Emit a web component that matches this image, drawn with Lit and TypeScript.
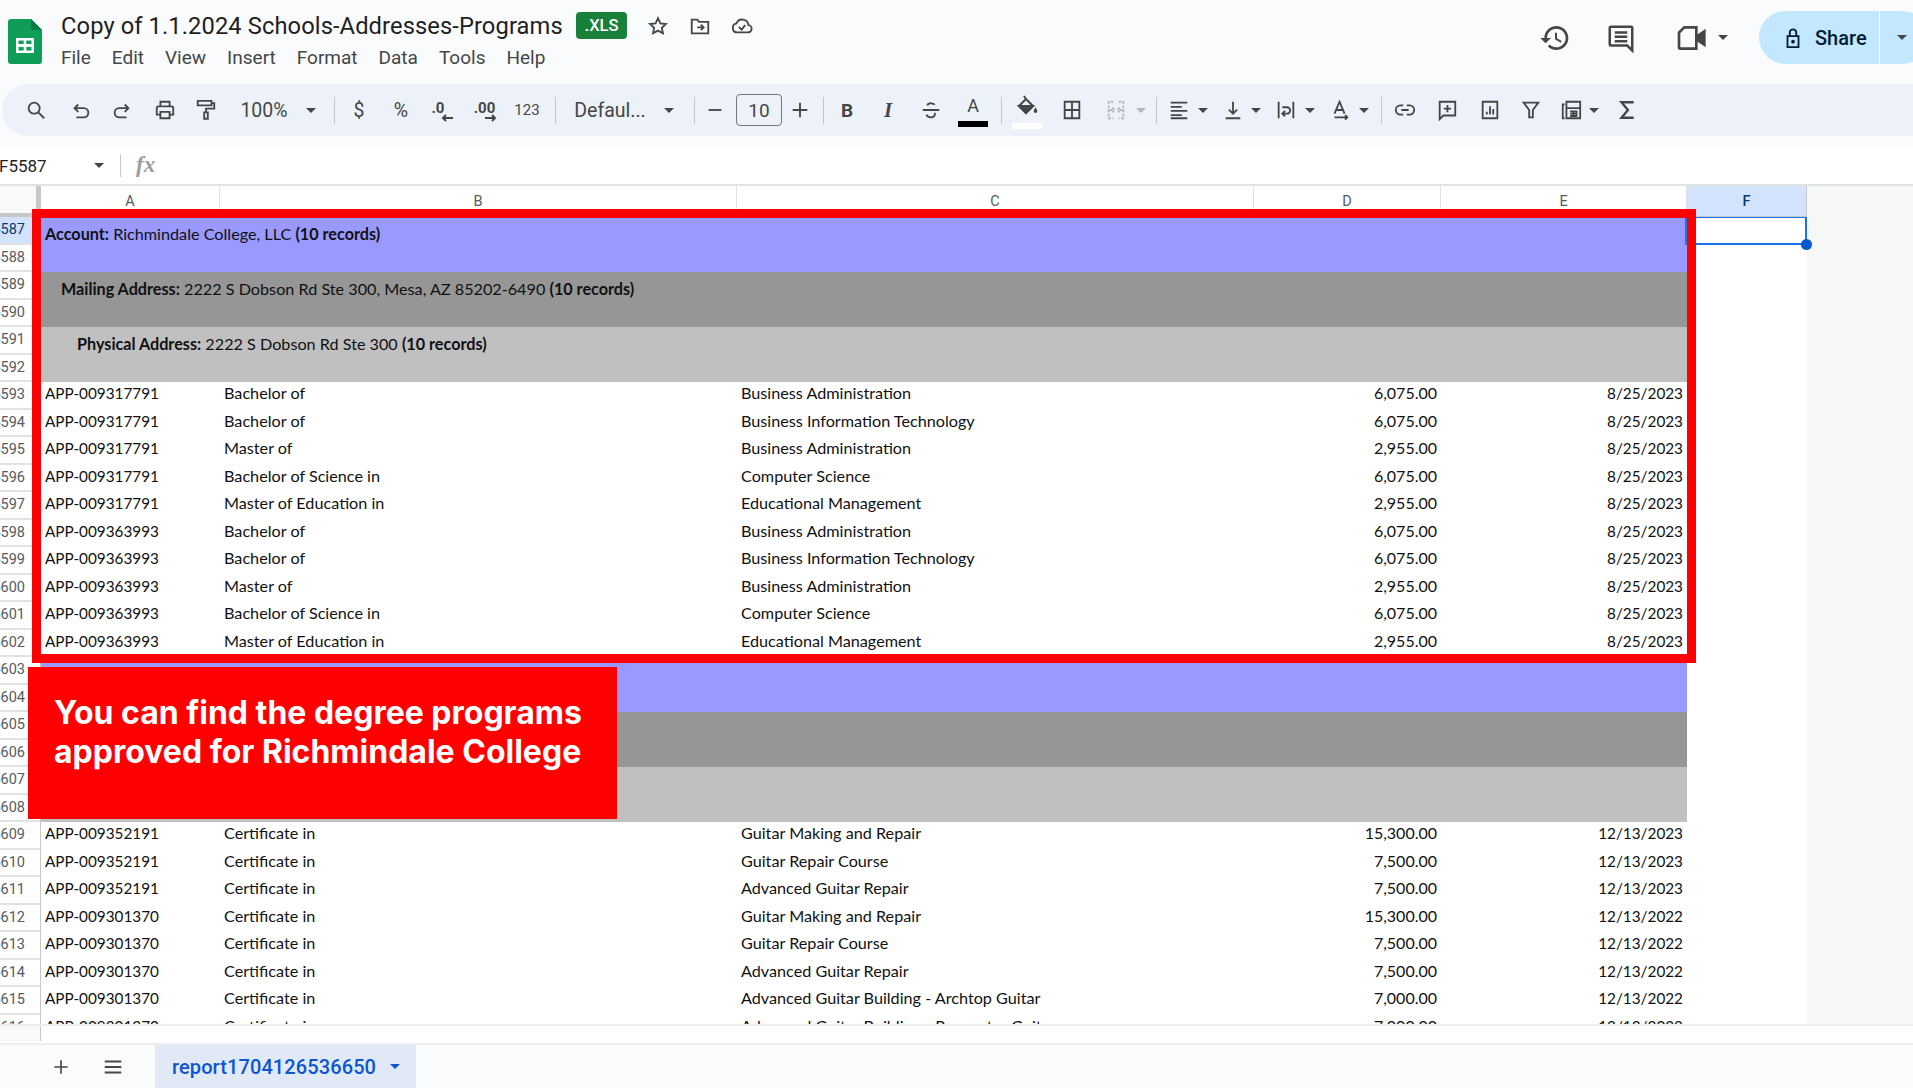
import { LitElement, html, css, svg } from 'lit';
import { customElement } from 'lit/decorators.js';

const icons: Record<string, unknown> = {
    search: svg`<circle cx="10" cy="10" r="6"/><path d="M14.5 14.5 21 21"/>`,
    undo: svg`<path d="M9 5 5 9l4 4M5 9h10a4.5 4.5 0 0 1 0 10H7" transform="translate(0 1)"/>`,
    redo: svg`<path d="M15 5l4 4-4 4M19 9H9a4.5 4.5 0 0 0 0 10h8" transform="translate(0 1)"/>`,
    print: svg`<path d="M7 8V3h10v5M7 17H3v-7a2 2 0 0 1 2-2h14a2 2 0 0 1 2 2v7h-4"/><path d="M7 14h10v7H7z"/>`,
    roller: svg`<path d="M3 2h15v5H3zM18 4.500h3v6h-9v4"/><path d="M10 14.500h4v7h-4z"/>`,
    strike: svg`<path d="M3 12h18M16 6.500C15 4.500 9 3.500 8 7M16 15c1 3-1 5-4 5s-4-1-5-3"/>`,
    fill: svg`<path d="M9 1l2 3 7 7-7 7-7-7 7-7"/><path fill="currentColor" d="M4 11h14l-7 7z"/><path fill="currentColor" stroke="none" d="M20.500 12.500c1 1.500 1.800 2.600 1.800 3.700a1.800 1.800 0 0 1-3.600 0c0-1.100.8-2.200 1.800-3.700z"/>`,
    borders: svg`<path d="M4 3h16v18H4zM12 3v18M4 12h16"/>`,
    merge: svg`<path d="M9 3H4v18h5M15 3h5v18h-5M5 12h5M8 9.500l2.500 2.500L8 14.500M19 12h-5M16 9.500 13.500 12l2.500 2.500" stroke-dasharray="3 1.500"/>`,
    align: svg`<path d="M3 4h18M3 8.500h12M3 13h18M3 17.500h12M3 21h18"/>`,
    valign: svg`<path d="M12 3v13M7.500 11.500 12 16l4.500-4.500M4 21h16"/>`,
    wrap: svg`<path d="M4 3v18M20 3v18M8 9h5a3 3 0 0 1 0 7h-4M11 13l-3 3 3 3"/>`,
    rotate: svg`<path d="M6 16 11.500 3 17 16M8 12h7M6 20h14M17.500 17.500 20 20l-2.500 2.500"/>`,
    link: svg`<path d="M10 7H7a5 5 0 0 0 0 10h3M14 7h3a5 5 0 0 1 0 10h-3M8 12h8"/>`,
    comment: svg`<path d="M4 22V3h17v15H8zM12.500 6.500v8M8.500 10.500h8"/>`,
    chart: svg`<path d="M4 3h16v18H4zM8.500 17v-3M12 17V8M15.500 17v-6"/>`,
    filter: svg`<path d="M4 4h16l-6 8v8h-4v-8z"/>`,
    calc: svg`<path d="M5 21H3V6h2M7 3h15v18H7zM7 10h15M11 13.500h7v5h-7M14.500 13.500v5M11 16h7"/>`,
    sigma: svg`<path stroke-width="2.600" d="M18 5V3.500H6l7 8.500-7 8.500h12V19"/>`,
    history: svg`<path fill="currentColor" stroke="none" d="M13 3c-4.970 0-9 4.030-9 9H1l3.890 3.890.07.14L9 12H6c0-3.870 3.130-7 7-7s7 3.130 7 7-3.130 7-7 7c-1.930 0-3.680-.79-4.940-2.060l-1.420 1.420C8.270 19.990 10.510 21 13 21c4.970 0 9-4.030 9-9s-4.030-9-9-9zm-1 5v5l4.280 2.540.72-1.210-3.500-2.080V8H12z"/>`,
    chat: svg`<path d="M21 22l-4-4H4a1 1 0 0 1-1-1V4a1 1 0 0 1 1-1h16a1 1 0 0 1 1 1zM7 7.500h10M7 11h10M7 14.500h10"/>`,
    video: svg`<path d="M7 4h9v16H4a1 1 0 0 1-1-1V8z"/><path fill="currentColor" d="M22 7l-6 4v2l6 4z"/>`,
    lock: svg`<path d="M6 10h12v12H6zM8.500 10V6a3.500 3.500 0 0 1 7 0v4"/><circle cx="12" cy="16" r="1" fill="currentColor"/>`,
    star: svg`<path d="M12 3.500l2.600 5.600 6.100.7-4.500 4.200 1.200 6-5.400-3-5.400 3 1.200-6-4.500-4.200 6.100-.7z"/>`,
    move: svg`<path d="M3 5h6l2 2.500h10V20H3zM9 13.500h7M13 10.500l3 3-3 3"/>`,
    cloud: svg`<path d="M7 19a5 5 0 0 1-1-9.900 6.800 6.800 0 0 1 13 1.900 4 4 0 0 1-1 8zM8.500 13l3 3 4-5"/>`,
    plus: svg`<path d="M12 4v16M4 12h16"/>`,
    lines: svg`<path d="M3 6h18M3 12h18M3 18h18"/>`,
    minus: svg`<path d="M5 12h14"/>`,
};

function icon(name: string, size = 22) {
    return html`<svg class="ic" width=${size} height=${size} viewBox="0 0 24 24">${icons[name]}</svg>`;
}

const caret = html`<i class="caret"></i>`;

// centre x of every toolbar item, as measured from the reference
const tools: [string, number, number, string?][] = [
    ['search', 36, 22],
    ['undo', 81, 22],
    ['redo', 122, 22],
    ['print', 165, 24],
    ['roller', 206, 24],
    ['t:100%', 264, 50],
    ['caret', 311, 10],
    ['sep', 334, 1],
    ['t:$', 359, 12],
    ['t:%', 401, 18],
    ['dec1', 443, 26],
    ['dec2', 486, 26],
    ['small:123', 527, 26],
    ['sep', 555, 1],
    ['t:Defaul...', 610, 72],
    ['caret', 669, 10],
    ['sep', 694, 1],
    ['minus', 715, 22],
    ['size', 759, 46],
    ['plus', 800, 22],
    ['sep', 823, 1],
    ['bold', 847, 16],
    ['italic', 888, 12],
    ['strike', 931, 22],
    ['color', 973, 30],
    ['sep', 1001, 1],
    ['bucket', 1027, 30],
    ['borders', 1072, 24],
    ['merge', 1116, 24, 'dim'],
    ['caretdim', 1141, 10],
    ['sep', 1156, 1],
    ['align', 1179, 24],
    ['caret', 1203, 10],
    ['valign', 1233, 24],
    ['caret', 1256, 10],
    ['wrap', 1286, 24],
    ['caret', 1310, 10],
    ['rotate', 1340, 24],
    ['caret', 1364, 10],
    ['sep', 1381, 1],
    ['link', 1405, 24],
    ['comment', 1447, 24],
    ['chart', 1490, 24],
    ['filter', 1531, 22],
    ['calc', 1571, 24],
    ['caret', 1594, 10],
    ['sigma', 1627, 22],
];

const programs: [string, string, string, string, string][] = [
    ['APP-009317791', 'Bachelor of', 'Business Administration', '6,075.00', '8/25/2023'],
    ['APP-009317791', 'Bachelor of', 'Business Information Technology', '6,075.00', '8/25/2023'],
    ['APP-009317791', 'Master of', 'Business Administration', '2,955.00', '8/25/2023'],
    ['APP-009317791', 'Bachelor of Science in', 'Computer Science', '6,075.00', '8/25/2023'],
    ['APP-009317791', 'Master of Education in', 'Educational Management', '2,955.00', '8/25/2023'],
    ['APP-009363993', 'Bachelor of', 'Business Administration', '6,075.00', '8/25/2023'],
    ['APP-009363993', 'Bachelor of', 'Business Information Technology', '6,075.00', '8/25/2023'],
    ['APP-009363993', 'Master of', 'Business Administration', '2,955.00', '8/25/2023'],
    ['APP-009363993', 'Bachelor of Science in', 'Computer Science', '6,075.00', '8/25/2023'],
    ['APP-009363993', 'Master of Education in', 'Educational Management', '2,955.00', '8/25/2023'],
];

const guitars: [string, string, string, string, string][] = [
    ['APP-009352191', 'Certificate in', 'Guitar Making and Repair', '15,300.00', '12/13/2023'],
    ['APP-009352191', 'Certificate in', 'Guitar Repair Course', '7,500.00', '12/13/2023'],
    ['APP-009352191', 'Certificate in', 'Advanced Guitar Repair', '7,500.00', '12/13/2023'],
    ['APP-009301370', 'Certificate in', 'Guitar Making and Repair', '15,300.00', '12/13/2022'],
    ['APP-009301370', 'Certificate in', 'Guitar Repair Course', '7,500.00', '12/13/2022'],
    ['APP-009301370', 'Certificate in', 'Advanced Guitar Repair', '7,500.00', '12/13/2022'],
    ['APP-009301370', 'Certificate in', 'Advanced Guitar Building - Archtop Guitar', '7,000.00', '12/13/2022'],
    ['APP-009301370', 'Certificate in', 'Advanced Guitar Building - Resonator Guitar', '7,000.00', '12/13/2022'],
];

const menus = ['File', 'Edit', 'View', 'Insert', 'Format', 'Data', 'Tools', 'Help'];
const rowNumbers = Array.from({ length: 30 }, (_, i) => 5587 + i);

@customElement('app-root')
export class AppRoot extends LitElement {
    static styles = css`
        * {
            box-sizing: border-box;
        }

        :host {
            display: flex;
            flex-direction: column;
            position: relative;
            width: 1913px;
            height: 1088px;
            overflow: hidden;
            background: #f9fbfd;
            font-family: Roboto, 'Liberation Sans', sans-serif;
            color: #1f1f1f;
        }

        .ic {
            display: block;
            fill: none;
            stroke: currentColor;
            stroke-width: 2;
            color: #444746;
            flex: none;
        }

        .caret {
            display: block;
            width: 0;
            height: 0;
            flex: none;
            border-left: 5px solid transparent;
            border-right: 5px solid transparent;
            border-top: 5px solid #444746;
        }

        /* title area */
        .top {
            height: 84px;
            flex: none;
            display: flex;
            padding: 12px 0 0 8px;
        }

        .logo {
            width: 34px;
            height: 45px;
            margin-top: 7px;
        }

        .names {
            margin-left: 19px;
            flex: 1;
        }

        .title-line {
            display: flex;
            align-items: center;
            height: 27px;
        }

        .title {
            font-size: 23.700px;
            width: 515px;
            white-space: nowrap;
            letter-spacing: 0.1px;
        }

        .badge {
            width: 51px;
            height: 27px;
            background: #188038;
            color: #fff;
            border-radius: 4px;
            font-size: 16.500px;
            font-weight: 500;
            display: flex;
            align-items: center;
            justify-content: center;
        }

        .title-icons {
            display: flex;
            gap: 20px;
            margin-left: 20px;
        }

        .menu {
            display: flex;
            gap: 21px;
            font-size: 19px;
            margin-top: 7px;
            color: #444746;
        }

        .right {
            display: flex;
            align-items: center;
            height: 53px;
            margin-top: -1px;
        }

        .right > .caret {
            margin-left: 11px;
        }

        .share {
            width: 170px;
            height: 53px;
            margin-left: 31px;
            margin-right: -16px;
            background: #c2e7ff;
            border-radius: 27px;
            display: flex;
            align-items: center;
            padding-left: 23px;
            font-size: 20px;
            font-weight: 500;
            color: #001d35;
        }

        .share span {
            margin-left: 11px;
            width: 64px;
        }

        .share .split {
            height: 53px;
            width: 1px;
            background: #f9fbfd;
            margin-right: 17px;
        }

        .share .ic {
            color: #001d35;
        }

        /* toolbar */
        .toolbar-wrap {
            height: 63px;
            flex: none;
            padding-left: 2px;
        }

        .toolbar {
            height: 52px;
            width: 1960px;
            background: #edf2fa;
            border-radius: 26px 0 0 26px;
            display: flex;
            align-items: center;
            color: #444746;
            white-space: nowrap;
        }

        .tool {
            flex: none;
            display: flex;
            align-items: center;
            justify-content: center;
            font-size: 19.500px;
            color: #444746;
        }

        .tool.small {
            font-size: 15px;
        }

        .tool.dim .ic {
            color: #b4b8bd;
        }

        .tool .caret.dim {
            border-top-color: #b4b8bd;
        }

        .sep {
            width: 1px;
            height: 27px;
            background: #c7c7c7;
        }

        .size {
            height: 32px;
            border: 1px solid #747775;
            border-radius: 4px;
            font-size: 19px;
        }

        .bold {
            font-weight: 700;
            font-size: 19px;
        }

        .italic {
            font-style: italic;
            font-family: 'Liberation Serif', serif;
            font-size: 21px;
            font-weight: 700;
        }

        .swatch {
            display: flex;
            flex-direction: column;
            align-items: center;
            height: 38px;
            width: 100%;
        }

        .swatch b {
            font-weight: 400;
            font-size: 18px;
            line-height: 26px;
            height: 30px;
            padding-top: 2px;
        }

        .swatch u {
            display: block;
            width: 100%;
            height: 6px;
        }

        .swatch .ic {
            margin-top: 4px;
            height: 24px;
        }

        .swatch .paper {
            background: #fff;
            margin-top: 4px;
        }

        .swatch .ink {
            background: #000;
        }

        .dec text {
            fill: #444746;
            stroke: none;
            font-family: Roboto, sans-serif;
            font-size: 15px;
            font-weight: 700;
        }

        /* formula bar */
        .formula {
            height: 37px;
            flex: none;
            background: #fff;
            display: flex;
            align-items: center;
            font-size: 17px;
        }

        .cell-name {
            width: 95px;
            margin-left: -1px;
        }

        .formula .split {
            width: 1px;
            height: 23px;
            background: #c7c7c7;
            margin: 0 15px 0 16px;
        }

        .fx {
            font-family: 'Liberation Serif', serif;
            font-style: italic;
            font-weight: 700;
            font-size: 23px;
            color: #9a9ea3;
            margin-top: -2px;
        }

        /* column headers */
        .sheet {
            height: 859px;
            flex: none;
            background: #fff;
            display: flex;
            flex-direction: column;
            overflow: hidden;
            border-top: 2px solid #e1e3e1;
        }

        .cols,
        .row {
            display: grid;
            grid-template-columns: 179px 517px 517px 187px 246px 120px;
        }

        .cols {
            height: 31px;
            flex: 1;
            font-size: 14.500px;
            color: #575a5e;
            background: #f6f8f6;
        }

        .cols div {
            display: flex;
            align-items: center;
            justify-content: center;
            background: #fff;
            border-right: 1px solid #e1e3e1;
        }

        .cols .on {
            background: #d3e3fd;
            color: #0b3a6e;
            font-weight: 500;
            border-right: 1px solid #c7c7c7;
            border-bottom: 1px solid #c7c7c7;
        }

        .head-wrap {
            display: flex;
            flex: none;
            height: 31px;
        }

        .corner {
            width: 41px;
            flex: none;
            background: #f8f9fa;
            border-right: 5px solid #c7c7c7;
            border-bottom: 4px solid #c7c7c7;
        }

        .grid-body {
            display: flex;
            height: 809px;
            flex: none;
            overflow: hidden;
            border-bottom: 2px solid #eceef0;
        }

        .gutter {
            width: 41px;
            flex: none;
            background: #fff;
            border-right: 1px solid #c7c7c7;
            overflow: hidden;
        }

        .num {
            height: 27.500px;
            border-bottom: 2px solid #e1e3e1;
            font-size: 14.500px;
            color: #575a5e;
            display: flex;
            align-items: center;
            justify-content: flex-end;
            padding-right: 15px;
        }

        .num.on {
            background: #d3e3fd;
            color: #0b3a6e;
        }

        /* white up to the end of column F, then the empty sheet colour */
        .cells {
            flex: 1;
            background: linear-gradient(to right, #fff 1766px, #f6f8f6 1766px);
            font-family: Lato, 'Liberation Sans', sans-serif;
            font-size: 16.200px;
            color: #111;
        }

        .band {
            height: 55px;
            width: 1646px;
            padding: 6.500px 4px;
            line-height: 20px;
            white-space: nowrap;
        }

        .band b {
            font-weight: 700;
        }

        .account {
            background: #9999ff;
        }

        .mailing {
            background: #969696;
            padding-left: 20px;
        }

        .physical {
            background: #c0c0c0;
            padding-left: 36px;
        }

        .row {
            height: 27.500px;
            align-items: center;
            line-height: 22px;
        }

        .row div {
            padding: 0 4px 5px;
            white-space: nowrap;
        }

        .row .id {
            font-size: 15.300px;
        }

        .row .fee {
            font-size: 16px;
            text-align: right;
        }

        .row .date {
            font-size: 15.300px;
            text-align: right;
        }

        .scrollbar {
            flex: 1;
            display: flex;
        }

        .scrollbar div {
            width: 41px;
            height: 15px;
            background: #f8f9fa;
            border-right: 1px solid #c7c7c7;
        }

        /* sheet tabs */
        .tabs {
            flex: 1;
            display: flex;
            align-items: center;
            border-top: 2px solid #eceef0;
            padding-left: 51px;
        }

        .tabs .ic {
            margin-right: 31px;
        }

        .tab {
            align-self: stretch;
            width: 261px;
            background: #e1e9f7;
            color: #0b57d0;
            font-size: 20px;
            font-weight: 500;
            display: flex;
            align-items: center;
            padding-left: 17px;
            gap: 14px;
            letter-spacing: 0.1px;
        }

        .tab .caret {
            border-top-color: #0b57d0;
        }

        /* things that lie over the sheet */
        .frame {
            position: absolute;
            left: 32px;
            top: 209px;
            width: 1664px;
            height: 454px;
            border: 9px solid #ff0000;
        }

        .callout {
            position: absolute;
            left: 28px;
            top: 667px;
            width: 589px;
            height: 152px;
            background: #ff0000;
            color: #fff;
            font-family: Inter, 'Liberation Sans', sans-serif;
            font-weight: 700;
            font-size: 32px;
            line-height: 38.500px;
            padding: 27px 0 0 26px;
            white-space: nowrap;
        }

        .selection {
            position: absolute;
            left: 1685px;
            top: 217px;
            width: 122px;
            height: 28px;
            border: 2px solid #1a73e8;
            border-top-width: 1px;
        }

        .handle {
            position: absolute;
            right: -7px;
            bottom: -7px;
            width: 11px;
            height: 11px;
            border-radius: 50%;
            background: #0b57d0;
        }
    `;

    private renderTools() {
        let right = 2;
        return tools.map(([kind, centre, width, extra]) => {
            const left = centre - width / 2;
            const gap = left - right;
            right = left + width;
            const style = `width:${width}px;margin-left:${gap}px`;
            let body: unknown = '';
            let cls = 'tool';
            if (kind === 'caret') body = caret;
            else if (kind === 'caretdim') body = html`<i class="caret dim"></i>`;
            else if (kind === 'sep') cls += ' sep';
            else if (kind.startsWith('t:')) body = kind.slice(2);
            else if (kind.startsWith('small:')) {
                body = kind.slice(6);
                cls += ' small';
            } else if (kind === 'size') {
                body = '10';
                cls += ' size';
            } else if (kind === 'bold') {
                body = 'B';
                cls += ' bold';
            } else if (kind === 'italic') {
                body = 'I';
                cls += ' italic';
            } else if (kind === 'color') {
                body = html`<div class="swatch"><b>A</b><u class="ink"></u></div>`;
            } else if (kind === 'bucket') {
                body = html`<div class="swatch">${icon('fill', 24)}<u class="paper"></u></div>`;
            } else if (kind === 'dec1' || kind === 'dec2') {
                const isOne = kind === 'dec1';
                const arrow = isOne ? 'M23 21H13M16 18l-3 3 3 3' : 'M12 21h10M19 18l3 3-3 3';
                body = html`<svg class="ic dec" width="26" height="26" viewBox="0 0 26 26" stroke-width="1.800">
                    <text x=${isOne ? 8 : 11.500} y="16" text-anchor="middle">${isOne ? '.0' : '.00'}</text>
                    <path d=${arrow}></path>
                </svg>`;
            } else {
                body = icon(kind);
            }
            if (extra) cls += ' ' + extra;
            return html`<div class=${cls} style=${style}>${body}</div>`;
        });
    }

    private renderRow(r: string[]) {
        return html`<div class="row">
            <div class="id">${r[0]}</div>
            <div>${r[1]}</div>
            <div>${r[2]}</div>
            <div class="fee">${r[3]}</div>
            <div class="date">${r[4]}</div>
        </div>`;
    }

    render() {
        return html`
            <div class="top">
                <svg class="logo" viewBox="0 0 34 45">
                    <path d="M3 0h20l11 11v31a3 3 0 0 1-3 3H3a3 3 0 0 1-3-3V3a3 3 0 0 1 3-3z" fill="#0f9d58"></path>
                    <path d="M23 0l11 11H25a2 2 0 0 1-2-2z" fill="#0a7a43"></path>
                    <path d="M8 19h18v15H8z M10.500 21.500v3.500h5.200v-3.500z M18.300 21.500v3.500h5.200v-3.500z M10.500 28v3.500h5.200V28z M18.300 28v3.500h5.200V28z" fill="#fff" fill-rule="evenodd"></path>
                </svg>
                <div class="names">
                    <div class="title-line">
                        <div class="title">Copy of 1.1.2024 Schools-Addresses-Programs</div>
                        <div class="badge">.XLS</div>
                        <div class="title-icons">${icon('star')}${icon('move')}${icon('cloud')}</div>
                    </div>
                    <div class="menu">${menus.map((m) => html`<span>${m}</span>`)}</div>
                </div>
                <div class="right">
                    ${icon('history', 32)}
                    <span style="width:35px"></span>
                    ${icon('chat', 30)}
                    <span style="width:39px"></span>
                    ${icon('video', 32)}
                    ${caret}
                    <div class="share">
                        ${icon('lock', 22)}
                        <span>Share</span>
                        <div class="split"></div>
                        ${caret}
                    </div>
                </div>
            </div>

            <div class="toolbar-wrap">
                <div class="toolbar">${this.renderTools()}</div>
            </div>

            <div class="formula">
                <div class="cell-name">F5587</div>
                ${caret}
                <div class="split"></div>
                <div class="fx">fx</div>
            </div>

            <div class="sheet">
                <div class="head-wrap">
                    <div class="corner"></div>
                    <div class="cols">
                        <div>A</div>
                        <div>B</div>
                        <div>C</div>
                        <div>D</div>
                        <div>E</div>
                        <div class="on">F</div>
                    </div>
                </div>
                <div class="grid-body">
                    <div class="gutter">
                        ${rowNumbers.map(
                            (n) => html`<div class="num ${n === 5587 ? 'on' : ''}">${n}</div>`
                        )}
                    </div>
                    <div class="cells">
                        <div class="band account"><b>Account:</b> Richmindale College, LLC <b>(10 records)</b></div>
                        <div class="band mailing"><b>Mailing Address:</b> 2222 S Dobson Rd Ste 300, Mesa, AZ 85202-6490 <b>(10 records)</b></div>
                        <div class="band physical"><b>Physical Address:</b> 2222 S Dobson Rd Ste 300 <b>(10 records)</b></div>
                        ${programs.map((r) => this.renderRow(r))}
                        <div class="band account"></div>
                        <div class="band mailing"></div>
                        <div class="band physical"></div>
                        ${guitars.map((r) => this.renderRow(r))}
                    </div>
                </div>
                <div class="scrollbar"><div></div></div>
            </div>

            <div class="tabs">
                ${icon('plus', 20)}${icon('lines', 22)}
                <div class="tab">report1704126536650 ${caret}</div>
            </div>

            <div class="selection"><div class="handle"></div></div>
            <div class="frame"></div>
            <div class="callout">You can find the degree programs<br />approved for Richmindale College</div>
        `;
    }
}
